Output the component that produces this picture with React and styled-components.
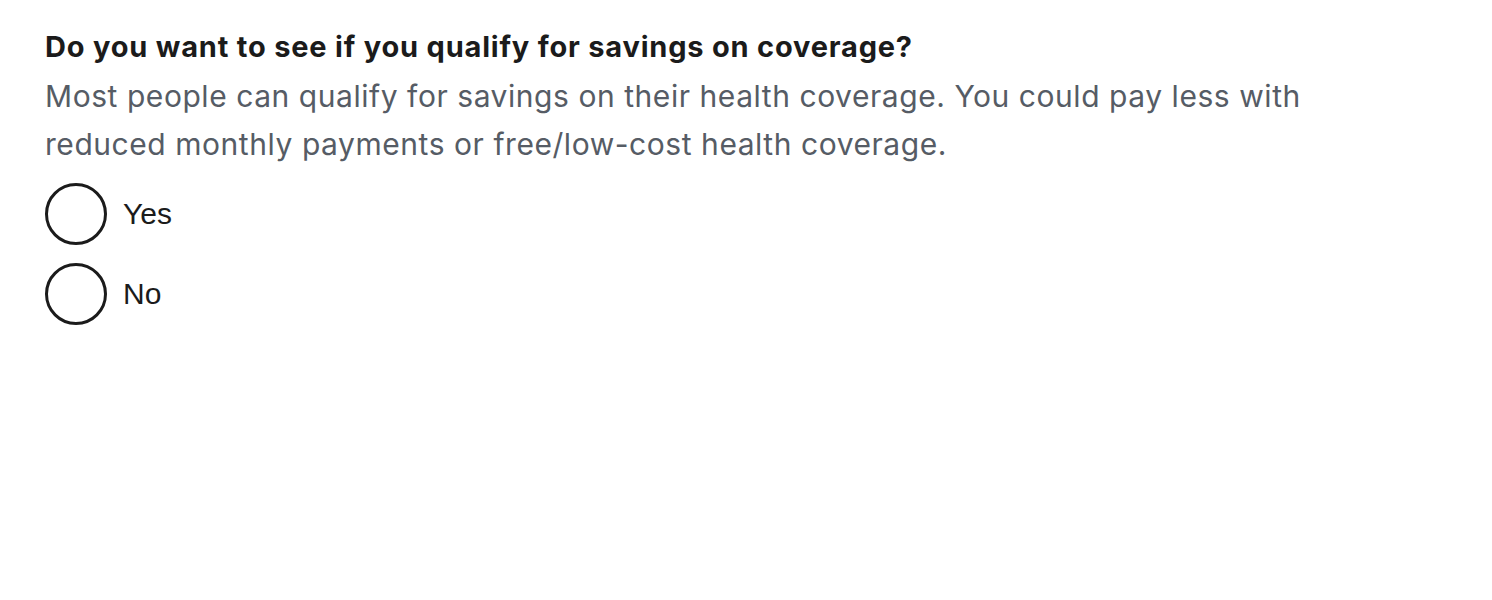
import React from 'react';
import styled, { createGlobalStyle } from 'styled-components';

const GlobalStyle = createGlobalStyle`
  body {
    margin: 0;
    background: #ffffff;
  }
`

const Wrapper = styled.fieldset`
  border: none;
  margin: 29px 0 0 0;
  padding: 0 45px;
  min-width: 0;
`

const Question = styled.legend`
  padding: 0;
  font-family: Inter, "Open Sans", sans-serif;
  font-weight: 700;
  font-size: 29px;
  line-height: 36px;
  letter-spacing: 0.8px;
  color: #1b1b1b;
`

const Hint = styled.div`
  font-family: Inter, "Open Sans", sans-serif;
  font-size: 30px;
  line-height: 48px;
  letter-spacing: 0.55px;
  color: #565c65;
  max-width: 1330px;
  margin-top: 7px;
`

const Options = styled.div`
  display: flex;
  flex-direction: column;
  gap: 18px;
  margin-top: 15px;
`

const Option = styled.label`
  display: flex;
  align-items: center;
  gap: 16px;
  font-family: "Liberation Sans", Arial, sans-serif;
  font-size: 30px;
  color: #1b1b1b;
  cursor: pointer;
`

const Circle = styled.span`
  width: 62px;
  height: 62px;
  box-sizing: border-box;
  border: 3px solid #1b1b1b;
  border-radius: 50%;
  flex-shrink: 0;
`

const Radio = ({ label }) => (
  <Option>
    <Circle />
    <span>{label}</span>
  </Option>
)

const App = () => (
  <>
    <GlobalStyle />
    <Wrapper>
      <Question>Do you want to see if you qualify for savings on coverage?</Question>
      <Hint>
        Most people can qualify for savings on their health coverage. You could pay less with
        reduced monthly payments or free/low-cost health coverage.
      </Hint>
      <Options>
        <Radio label="Yes" />
        <Radio label="No" />
      </Options>
    </Wrapper>
  </>
)

export default App;
